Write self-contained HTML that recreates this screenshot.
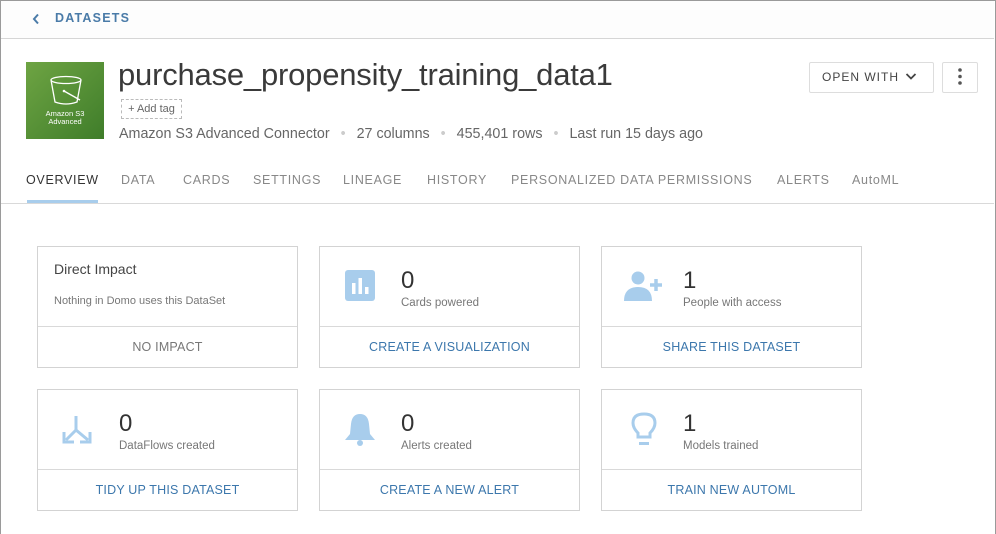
<!DOCTYPE html>
<html><head><style>
*{box-sizing:border-box;margin:0;padding:0}
body{width:996px;height:534px;overflow:hidden;background:#fff;font-family:"Liberation Sans",sans-serif;position:relative;color:#333}
.frame{position:absolute;left:0;top:0;width:996px;height:534px;border:1px solid #9a9a9a;border-bottom:none}
.topbar{position:absolute;left:1px;top:1px;width:993px;height:38px;border-bottom:1px solid #d6d6d6;background:#fdfdfd}
.ab{position:absolute}
.card{position:absolute;width:261px;height:122px;border:1px solid #d3d3d3;background:#fff}
.card .bot{position:absolute;left:0;right:0;top:79px;border-top:1px solid #d9d9d9;height:41px;text-align:center;line-height:41px;font-size:12.5px;color:#3c77ac;letter-spacing:.2px}
.num{position:absolute;left:81px;top:20px;font-size:24px;color:#333}
.lab{position:absolute;left:81px;top:50px;font-size:11.5px;color:#777}
.ic{position:absolute;left:22px;top:24px}
.tab{position:absolute;top:173px;font-size:12.5px;letter-spacing:.7px;color:#888}
</style></head><body>
<div class="frame"></div>
<div class="topbar"></div>
<svg class="ab" style="left:31px;top:13px" width="10" height="12"><path d="M7 1.5 L3 6 L7 10.5" stroke="#4a7ba8" stroke-width="2" fill="none"/></svg>
<div class="ab" style="left:55px;top:11px;font-size:12.5px;font-weight:bold;color:#4a7ba8;letter-spacing:1.2px">DATASETS</div>

<div class="ab" style="left:26px;top:62px;width:78px;height:77px;background:linear-gradient(135deg,#6ea443,#3f7d2a)"></div>
<svg class="ab" style="left:48px;top:74px" width="36" height="36"><path d="M3 6 L7 28 Q18 32 29 28 L33 6" stroke="#fff" stroke-width="1.3" fill="none"/><ellipse cx="18" cy="6" rx="15" ry="3.5" stroke="#fff" stroke-width="1.3" fill="none"/><path d="M16 17 L32 26" stroke="#fff" stroke-width="1.3"/><circle cx="16" cy="17" r="1.3" fill="#fff"/></svg>
<div class="ab" style="left:26px;top:110px;width:78px;text-align:center;font-size:7.5px;line-height:8px;color:#fff">Amazon S3<br>Advanced</div>

<div class="ab" style="left:118px;top:57px;font-size:31px;color:#3a3a3a;letter-spacing:-.2px;white-space:nowrap">purchase_propensity_training_data1</div>
<div class="ab" style="left:121px;top:99px;width:61px;height:20px;border:1px dashed #bbb;font-size:11px;color:#666;text-align:center;line-height:18px">+ Add tag</div>
<div class="ab" style="left:119px;top:126px;font-size:14.3px;color:#666;white-space:nowrap">Amazon S3 Advanced Connector <span style="color:#ccc;margin:0 7px">•</span> 27 columns <span style="color:#ccc;margin:0 7px">•</span> 455,401 rows <span style="color:#ccc;margin:0 7px">•</span> Last run 15 days ago</div>

<div class="ab" style="left:809px;top:62px;width:125px;height:31px;border:1px solid #ddd;border-radius:2px;font-size:12px;letter-spacing:1px;color:#444;line-height:29px;padding-left:12px">OPEN WITH</div>
<svg class="ab" style="left:905px;top:72px" width="12" height="10"><path d="M1.5 2 L6 6.5 L10.5 2" stroke="#444" stroke-width="1.8" fill="none"/></svg>
<div class="ab" style="left:942px;top:62px;width:36px;height:31px;border:1px solid #ddd;border-radius:2px"></div>
<svg class="ab" style="left:956px;top:67px" width="8" height="20"><circle cx="4" cy="3" r="1.8" fill="#555"/><circle cx="4" cy="9.5" r="1.8" fill="#555"/><circle cx="4" cy="16" r="1.8" fill="#555"/></svg>

<div class="tab" style="left:26px;color:#333">OVERVIEW</div>
<div class="tab" style="left:121px">DATA</div>
<div class="tab" style="left:183px">CARDS</div>
<div class="tab" style="left:253px">SETTINGS</div>
<div class="tab" style="left:343px">LINEAGE</div>
<div class="tab" style="left:427px">HISTORY</div>
<div class="tab" style="left:511px">PERSONALIZED DATA PERMISSIONS</div>
<div class="tab" style="left:777px">ALERTS</div>
<div class="tab" style="left:852px">AutoML</div>
<div class="ab" style="left:27px;top:200px;width:71px;height:4px;background:#a8cdec"></div>
<div class="ab" style="left:1px;top:203px;width:993px;height:1px;background:#d9d9d9"></div>

<div class="card" style="left:37px;top:246px">
<div class="ab" style="left:16px;top:14px;font-size:14px;color:#444">Direct Impact</div>
<div class="ab" style="left:16px;top:48px;font-size:11px;color:#777">Nothing in Domo uses this DataSet</div>
<div class="bot" style="color:#777">NO IMPACT</div></div>

<div class="card" style="left:319px;top:246px">
<svg class="ic" width="34" height="34" style="left:24px;top:22px"><rect x="1" y="1" width="30" height="31" rx="3" fill="#a8cdec"/><rect x="8" y="14" width="3.5" height="11" fill="#fff"/><rect x="14.5" y="9" width="3.5" height="16" fill="#fff"/><rect x="21" y="18" width="3.5" height="7" fill="#fff"/></svg>
<div class="num">0</div><div class="lab">Cards powered</div>
<div class="bot">CREATE A VISUALIZATION</div></div>

<div class="card" style="left:601px;top:246px">
<svg class="ic" width="42" height="34" style="left:21px;top:22px"><circle cx="15" cy="9" r="6.5" fill="#a8cdec"/><path d="M1 32 Q1 18 15 18 Q29 18 29 32 Z" fill="#a8cdec"/><path d="M33 10 V22 M27 16 H39" stroke="#a8cdec" stroke-width="3.5"/></svg>
<div class="num">1</div><div class="lab">People with access</div>
<div class="bot">SHARE THIS DATASET</div></div>

<div class="card" style="left:37px;top:389px">
<svg class="ic" width="34" height="34" style="left:24px;top:24px"><path d="M14 2 V16 L4 26 M14 16 L26 26" stroke="#a8cdec" stroke-width="3" fill="none"/><path d="M2 18 V28 H12 M18 28 H28 V18" stroke="#a8cdec" stroke-width="3" fill="none"/></svg>
<div class="num">0</div><div class="lab">DataFlows created</div>
<div class="bot">TIDY UP THIS DATASET</div></div>

<div class="card" style="left:319px;top:389px">
<svg class="ic" width="34" height="34" style="left:24px;top:22px"><path d="M16 2 Q8 2 7 12 L6 22 L1 28 H31 L26 22 L25 12 Q24 2 16 2 Z" fill="#a8cdec"/><circle cx="16" cy="31" r="3" fill="#a8cdec"/></svg>
<div class="num">0</div><div class="lab">Alerts created</div>
<div class="bot">CREATE A NEW ALERT</div></div>

<div class="card" style="left:601px;top:389px">
<svg class="ic" width="34" height="36" style="left:29px;top:22px"><path d="M7 21 Q2 16 2 11 Q2 2 13 2 Q24 2 24 11 Q24 16 19 21 V25 H7 Z" stroke="#a8cdec" stroke-width="3" fill="none"/><rect x="8" y="30" width="10" height="3" fill="#a8cdec"/></svg>
<div class="num">1</div><div class="lab">Models trained</div>
<div class="bot">TRAIN NEW AUTOML</div></div>
</body></html>
